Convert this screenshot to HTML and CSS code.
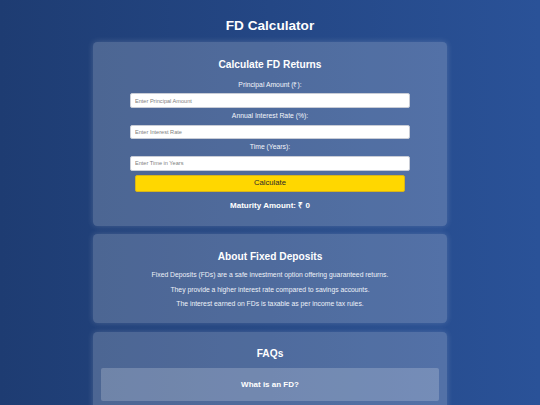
FILE: index.html
```html
<!DOCTYPE html>
<html lang="en">
<head>
<meta charset="utf-8">
<title>FD Calculator</title>
<link rel="stylesheet" href="styles.css">
</head>
<body>
  <h1 class="page-title">FD Calculator</h1>

  <section class="card">
    <h2 class="card-title">Calculate FD Returns</h2>
    <label class="field-label" for="principal">Principal Amount (₹):</label>
    <input class="field-input" id="principal" type="number" placeholder="Enter Principal Amount">
    <label class="field-label" for="rate">Annual Interest Rate (%):</label>
    <input class="field-input" id="rate" type="number" placeholder="Enter Interest Rate">
    <label class="field-label" for="time">Time (Years):</label>
    <input class="field-input" id="time" type="number" placeholder="Enter Time in Years">
    <button class="calc-btn" type="button">Calculate</button>
    <h3 class="result">Maturity Amount: ₹ 0</h3>
  </section>

  <section class="card">
    <h2 class="card-title">About Fixed Deposits</h2>
    <p class="info">Fixed Deposits (FDs) are a safe investment option offering guaranteed returns.</p>
    <p class="info">They provide a higher interest rate compared to savings accounts.</p>
    <p class="info">The interest earned on FDs is taxable as per income tax rules.</p>
  </section>

  <section class="card card-faq">
    <h2 class="card-title">FAQs</h2>
    <div class="faq-item">
      <h3 class="faq-q">What is an FD?</h3>
    </div>
  </section>
</body>
</html>
```

FILE: styles.css
```css
html, body {
  margin: 0;
  padding: 0;
}

body {
  min-height: 100vh;
  background: linear-gradient(to right, #1e3c72, #2a5298);
  font-family: "Liberation Sans", Arial, sans-serif;
  color: #ffffff;
  text-align: center;
  padding: 0 8.4px;
  box-sizing: border-box;
  overflow: hidden;
}

.page-title {
  font-size: 13.6px;
  line-height: 16px;
  margin: 0;
  padding-top: 17.5px;
  padding-bottom: 8.5px;
  font-weight: bold;
}

.card {
  max-width: 337.6px;
  margin: 0 auto 8.4px;
  padding: 8.4px;
  background: rgba(255, 255, 255, 0.2);
  border-radius: 4.2px;
  box-shadow: 0 0 6px rgba(255, 255, 255, 0.18);
}

.card-faq {
  padding-bottom: 20px;
}

.card-title {
  font-size: 10.2px;
  line-height: 11.6px;
  margin: 8.4px 0;
  font-weight: bold;
}

.field-label {
  display: block;
  font-size: 6.8px;
  line-height: 8px;
  color: #f4f6fb;
}

.card-title + .field-label {
  margin-top: 10.4px;
}

.field-input {
  display: block;
  width: 80%;
  margin: 4.4px auto 4.2px;
  padding: 3.4px 4.2px;
  font-family: "Liberation Sans", Arial, sans-serif;
  font-size: 5.6px;
  line-height: 6.2px;
  border: 0.5px solid #c8ccd6;
  border-radius: 2px;
  background: #ffffff;
  color: #333;
  outline: none;
}

.field-input::placeholder {
  color: #808080;
}

.calc-btn {
  display: block;
  width: 80%;
  margin: 3.4px auto 0;
  padding: 3.4px 4.2px;
  font-family: "Liberation Sans", Arial, sans-serif;
  font-size: 7.7px;
  line-height: 8.8px;
  background: #ffd700;
  color: #2b2b2b;
  border: 0.5px solid #d8b41a;
  border-radius: 2px;
}

.result {
  font-size: 8px;
  line-height: 9px;
  margin: 8.6px 0 7.6px;
  font-weight: bold;
}

.info {
  font-size: 6.8px;
  line-height: 7.8px;
  margin: 6.75px 0;
  color: #eef1f8;
}

.faq-item {
  background: rgba(255, 255, 255, 0.2);
  border-radius: 2px;
  padding: 4.2px;
}

.faq-q {
  font-size: 8px;
  line-height: 9px;
  margin: 7.6px 0;
  font-weight: bold;
}
```
